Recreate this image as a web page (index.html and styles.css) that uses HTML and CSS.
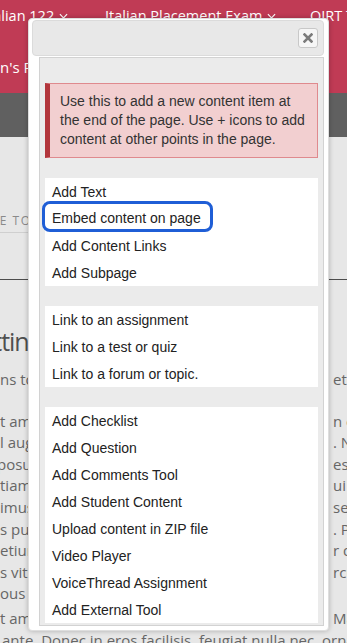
FILE: index.html
```html
<!DOCTYPE html>
<html>
<head>
<meta charset="utf-8">
<link rel="stylesheet" href="styles.css">
</head>
<body>
<div class="page">
  <header class="topbar">
    <nav class="navrow">
      <span class="navitem first">Italian 122 <svg class="chev" viewBox="0 0 10 6" width="9" height="6"><path d="M1 1l4 4 4-4" fill="none" stroke="#fff" stroke-width="1.3"/></svg></span>
      <span class="navitem second">Italian Placement Exam <svg class="chev" viewBox="0 0 10 6" width="9" height="6"><path d="M1 1l4 4 4-4" fill="none" stroke="#fff" stroke-width="1.3"/></svg></span>
      <span class="navitem third">OIRT Test Site</span>
    </nav>
    <div class="siterow">n's Portfolio</div>
  </header>
  <div class="darkbar"></div>
  <main class="content">
    <div class="toolbar"><span class="movebtn">MOVE TO</span></div>
    <div class="rule"></div>
    <h1 class="title">Getting Started</h1>
    <div class="intro ln"><span>ns to complete</span><span>ete</span></div>
    <div class="para">
      <div class="ln"><span>t amet</span><span>n c</span></div>
      <div class="ln"><span>l augue</span><span>. Nu</span></div>
      <div class="ln shift"><span>posuere</span><span>esq</span></div>
      <div class="ln"><span>tiam ut</span><span>ui (</span></div>
      <div class="ln"><span>imus ac</span><span>sec</span></div>
      <div class="ln"><span>s purus</span><span>. Pr</span></div>
      <div class="ln"><span>etium et</span><span>r d</span></div>
      <div class="ln"><span>s vitae</span><span>rcu</span></div>
      <div class="ln"><span>ous cras</span><span></span></div>
    </div>
    <div class="para last">
      <div class="ln"><span>t amet</span><span>Mau</span></div>
      <div class="full">ante. Donec in eros facilisis, feugiat nulla nec, ornare nisl.</div>
    </div>
  </main>
</div>

<div class="dialog">
  <div class="titlebar">
    <button class="close" aria-label="Close"><svg viewBox="0 0 10 10" width="10" height="10"><path d="M1.5 1.5l7 7M8.5 1.5l-7 7" stroke="#7b7b7b" stroke-width="2.6" stroke-linecap="square"/></svg></button>
  </div>
  <div class="panel">
    <div class="alert">Use this to add a new content item at the end of the page. Use + icons to add content at other points in the page.</div>
    <ul class="menu">
      <li><a>Add Text</a></li>
      <li><a class="focused">Embed content on page</a></li>
      <li><a>Add Content Links</a></li>
      <li><a>Add Subpage</a></li>
    </ul>
    <ul class="menu">
      <li><a>Link to an assignment</a></li>
      <li><a>Link to a test or quiz</a></li>
      <li><a>Link to a forum or topic.</a></li>
    </ul>
    <ul class="menu">
      <li><a>Add Checklist</a></li>
      <li><a>Add Question</a></li>
      <li><a>Add Comments Tool</a></li>
      <li><a>Add Student Content</a></li>
      <li><a>Upload content in ZIP file</a></li>
      <li><a>Video Player</a></li>
      <li><a>VoiceThread Assignment</a></li>
      <li><a>Add External Tool</a></li>
    </ul>
  </div>
</div>
</body>
</html>
```

FILE: styles.css
```css
* { box-sizing: border-box; }
html, body { margin: 0; padding: 0; }
body {
  width: 347px;
  height: 643px;
  overflow: hidden;
  position: relative;
  background: #e7e7e7;
  font-family: "Open Sans", "Liberation Sans", sans-serif;
}
.page { width: 347px; }
.topbar {
  height: 93px;
  background: #c03b55;
  color: #fff;
  font-size: 14.5px;
  overflow: hidden;
}
.navrow {
  display: flex;
  white-space: nowrap;
  height: 31px;
  align-items: center;
}
.navitem { flex: none; display: inline-flex; align-items: center; gap: 5px; }
.navitem.first { margin-left: -16px; width: 121px; }
.navitem.second { width: 205px; }
.chev { display: block; }
.siterow {
  margin-top: 25px;
  white-space: nowrap;
  font-size: 15px;
  line-height: 22px;
}
.darkbar { height: 44px; background: #606060; }
.content {
  color: #666;
  font-size: 15px;
}
.toolbar {
  height: 96px;
  padding-top: 72px;
}
.movebtn {
  display: inline-block;
  margin-left: -40px;
  padding: 2px 8px 3px;
  font-size: 12px;
  letter-spacing: 1.5px;
  color: #8a8a8a;
  border-bottom: 1px solid #cfcfcf;
}
.rule {
  margin-top: 46px;
  height: 1px;
  background: #4d4d4d;
}
.title {
  margin: 44px 0 0 -37px;
  font-size: 25px;
  letter-spacing: -1px;
  font-weight: 400;
  line-height: 34px;
  color: #4f4f4f;
  white-space: nowrap;
}
.ln {
  display: grid;
  grid-template-columns: 333px auto;
  white-space: nowrap;
  line-height: 21.6px;
  height: 21.6px;
}
.ln.shift { margin-left: -3px; grid-template-columns: 336px auto; }
.intro { margin-top: 11px; }
.para { margin-top: 20px; }
.para.last { margin-top: 3px; }
.full { white-space: nowrap; line-height: 21.6px; margin-left: 2px; }

/* dialog */
.dialog {
  position: absolute;
  left: 28px;
  top: 18px;
  width: 301px;
  height: 613px;
  background: #fff;
  border: 1px solid #dedede;
  border-radius: 4px;
  box-shadow: 0 0 5px rgba(0,0,0,0.25);
  padding: 1px 4px 0 3px;
  display: flex;
  flex-direction: column;
}
.titlebar {
  height: 36px;
  flex: none;
  background: #e8e8e8;
  border: 1px solid #dbdbdb;
  border-radius: 4px;
  display: flex;
  justify-content: flex-end;
  align-items: flex-start;
  padding: 7px 5px 0 0;
}
.close {
  width: 20px;
  height: 20px;
  padding: 0;
  margin: 0;
  background: #f6f6f6;
  border: 1px solid #c8c8c8;
  border-radius: 3px;
  display: flex;
  align-items: center;
  justify-content: center;
}
.close svg { display: block; }
.panel {
  flex: 1;
  margin: 1px 0 4px 7px;
  background: #ebebeb;
  border: 1px solid #d2d2d2;
  padding: 25px 5px 0 5px;
  overflow: hidden;
  font-family: "Liberation Sans", Arial, sans-serif;
  font-size: 14px;
}
.alert {
  background: #f2cfd0;
  border: 1px solid #df8a8e;
  border-left: 5px solid #b2363c;
  padding: 8px 8px 8px 10px;
  line-height: 19px;
  color: #333;
}
.menu {
  list-style: none;
  margin: 20px 0 0 0;
  padding: 0;
  background: #fff;
}
.menu li {
  height: 27px;
  display: flex;
  align-items: center;
}
.menu a {
  padding: 2px 0 0 7px;
  color: #222;
  line-height: 25px;
}
.menu a.focused {
  display: inline-block;
  align-self: flex-start;
  margin-top: -1px;
  padding: 4px 9px 0 7px;
  height: 25px;
  line-height: 21px;
  border-radius: 5px;
  outline: 3px solid #1f5ed6;
  outline-offset: 0;
}
```
